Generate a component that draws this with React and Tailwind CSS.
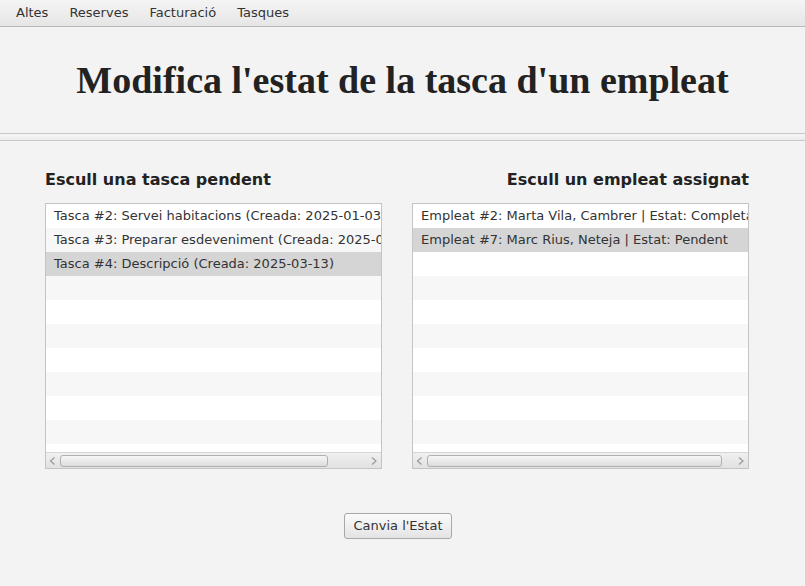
import React from "react";

const font = { fontFamily: '"DejaVu Sans", sans-serif' };

function Scrollbar({ thumbW }) {
  return (
    <div className="h-[16px] flex items-center border-t border-[#d6d6d6] bg-gradient-to-b from-[#f0f0f0] to-[#e2e2e2]">
      <svg width="14" height="16" viewBox="0 0 14 16" className="shrink-0">
        <path d="M8.5 4.5 L4.5 8 L8.5 11.5" fill="none" stroke="#9a9a9a" strokeWidth="1.2" />
      </svg>
      <div
        className="h-[12px] rounded-[3px] border border-[#b0b0b0] bg-gradient-to-b from-[#f7f7f7] to-[#dcdcdc]"
        style={{ width: thumbW }}
      />
      <div className="flex-1" />
      <svg width="14" height="16" viewBox="0 0 14 16" className="shrink-0">
        <path d="M5 4.5 L9 8 L5 11.5" fill="none" stroke="#9a9a9a" strokeWidth="1.2" />
      </svg>
    </div>
  );
}

function ListBox({ items, selected, thumbW }) {
  const rows = [];
  for (let i = 0; i < 11; i++) rows.push(i);
  return (
    <div className="w-[337px] h-[266px] border border-[#c4c4c4] bg-white flex flex-col">
      <div className="flex-1 overflow-hidden">
        {rows.map((i) => (
          <div
            key={i}
            className={
              "h-[24px] leading-[24px] pl-[8px] whitespace-nowrap text-[13px] text-[#333333] " +
              (i === selected ? "bg-[#d5d5d5]" : i % 2 === 1 ? "bg-[#f7f7f7]" : "bg-white")
            }
          >
            {items[i] || ""}
          </div>
        ))}
      </div>
      <Scrollbar thumbW={thumbW} />
    </div>
  );
}

export default function App() {
  return (
    <div className="w-[805px] h-[586px] bg-[#f3f3f3] overflow-hidden" style={font}>
      <div className="h-[27px] flex items-center pl-[5.5px] bg-gradient-to-b from-[#f4f4f4] to-[#e6e6e6] border-b border-[#b8b8b8] text-[13px] text-[#333333]">
        {["Altes", "Reserves", "Facturació", "Tasques"].map((m) => (
          <div key={m} className="px-[10.5px]">
            {m}
          </div>
        ))}
      </div>
      <div className="h-[106px] flex items-center justify-center">
        <h1
          className="text-[38px] font-bold text-[#222222] leading-none"
          style={{ fontFamily: '"Liberation Serif", serif' }}
        >
          Modifica l'estat de la tasca d'un empleat
        </h1>
      </div>
      <div className="h-[8px] border-t border-b border-[#c8c8c8] bg-gradient-to-b from-[#f6f6f6] to-[#ececec]" />
      <div className="px-[45px] pt-[28px] flex gap-[30px]">
        <div className="flex flex-col">
          <div className="h-[22px] leading-[22px] text-[16px] font-bold text-[#222222]">
            Escull una tasca pendent
          </div>
          <div className="mt-[12px]">
            <ListBox
              items={[
                "Tasca #2: Servei habitacions (Creada: 2025-01-03)",
                "Tasca #3: Preparar esdeveniment (Creada: 2025-02-20)",
                "Tasca #4: Descripció (Creada: 2025-03-13)",
              ]}
              selected={2}
              thumbW={268}
            />
          </div>
        </div>
        <div className="flex flex-col">
          <div className="h-[22px] leading-[22px] text-[16px] font-bold text-[#222222] text-right">
            Escull un empleat assignat
          </div>
          <div className="mt-[12px]">
            <ListBox
              items={[
                "Empleat #2: Marta Vila, Cambrer | Estat: Completada",
                "Empleat #7: Marc Rius, Neteja | Estat: Pendent",
              ]}
              selected={1}
              thumbW={295}
            />
          </div>
        </div>
      </div>
      <div className="flex justify-center mt-[44px] pr-[9px]">
        <button className="h-[26px] px-[8px] rounded-[3px] border border-[#a8a8a8] bg-gradient-to-b from-[#fbfbfb] to-[#e4e4e4] text-[13px] text-[#333333]">
          Canvia l'Estat
        </button>
      </div>
    </div>
  );
}
